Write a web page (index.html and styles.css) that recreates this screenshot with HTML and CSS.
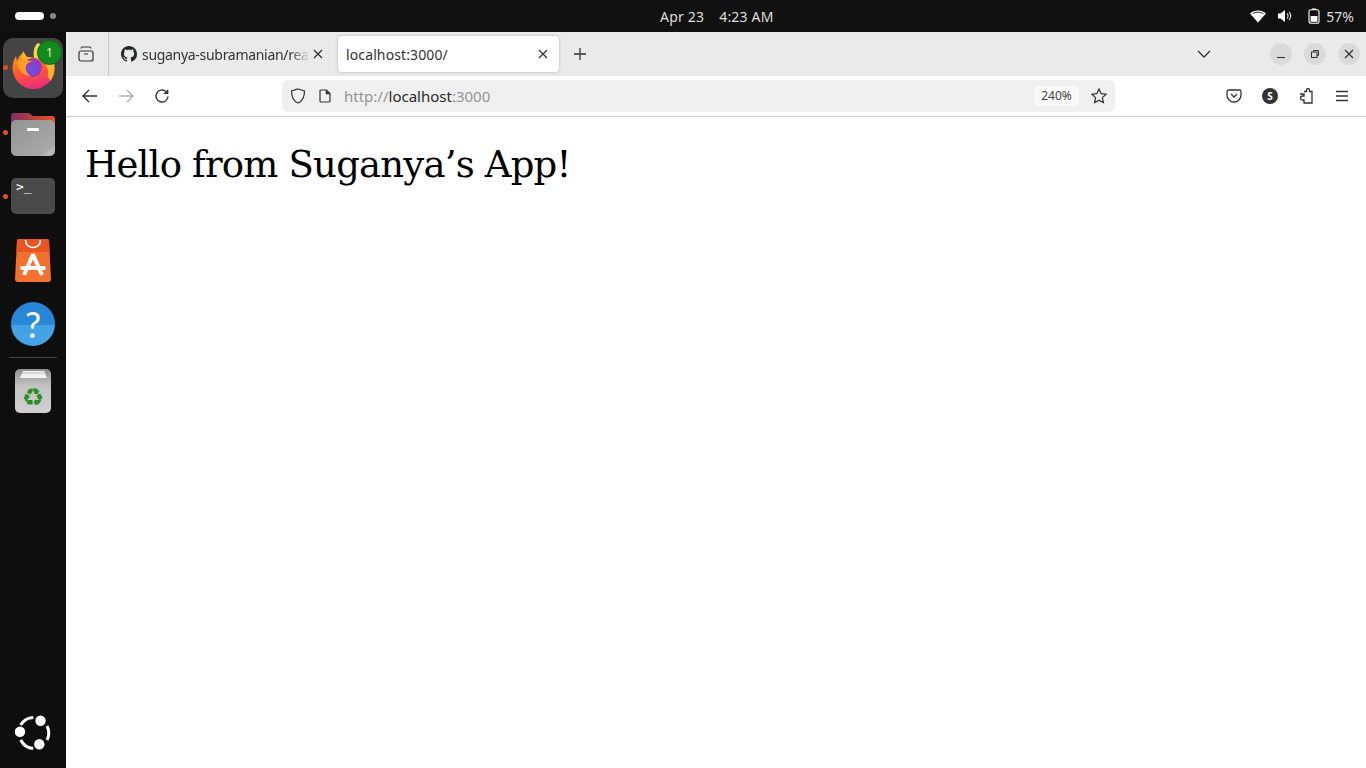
FILE: index.html
```html
<!doctype html>
<html lang="en">
    <head>
        <meta charset="UTF-8" />
        <title>localhost:3000</title>
        <link rel="stylesheet" href="styles.css">
    </head>
    <body>
        <header class="topbar">
            <div class="workspaces"><span class="ws-active"></span><span class="ws-dot"></span></div>
            <div class="clock"><span>Apr 23</span><span>4:23 AM</span></div>
            <div class="status">
                <svg width="16" height="13" viewBox="0 0 16 13"><path d="M0 3.6C2 1.4 5 .4 8 .4s6 1 8 3.2L8 12.6z" fill="#fff"/><path d="M2.6 3.9C4 2.8 6 2.2 8 2.2s4 .6 5.4 1.7" fill="none" stroke="#111" stroke-width=".9"/></svg>
                <svg class="vol" width="15" height="14" viewBox="0 0 15 14"><path d="M0 4.5h2.6L7 1v12L2.6 9.5H0z" fill="#fff"/><path d="M9 4.5a3.5 3.5 0 0 1 0 5M11 2.8a6 6 0 0 1 0 8.4" fill="none" stroke="#ddd" stroke-width="1.1"/></svg>
                <svg class="batt" width="12" height="16" viewBox="0 0 12 16"><path d="M4 .5h4v1.2H4z" fill="#fff"/><rect x="1" y="1.8" width="10" height="13.5" rx="2" fill="none" stroke="#fff" stroke-width="1.1"/><rect x="2.6" y="8" width="6.8" height="5.8" fill="#fff"/></svg>
                <span>57%</span>
            </div>
        </header>

        <div class="desktop">
            <nav class="dock">
                <div class="dock-tile">
                    <span class="run-dot"></span>
                    <svg width="60" height="60" viewBox="0 0 60 60">
                        <defs>
                            <linearGradient id="foxGrad" x1="0.3" y1="0" x2="0.55" y2="1">
                                <stop offset="0" stop-color="#ff9a1f"/>
                                <stop offset="0.5" stop-color="#ff5a2c"/>
                                <stop offset="1" stop-color="#ec2a86"/>
                            </linearGradient>
                            <linearGradient id="tailGrad" x1="0.2" y1="0" x2="0.6" y2="1">
                                <stop offset="0" stop-color="#f8dc4a"/>
                                <stop offset="1" stop-color="#ffae1f"/>
                            </linearGradient>
                            <radialGradient id="globeGrad" cx="0.45" cy="0.6" r="0.65">
                                <stop offset="0" stop-color="#6a55e4"/>
                                <stop offset="1" stop-color="#a02fb8"/>
                            </radialGradient>
                        </defs>
                        <path d="M9.500 30C9.500 25 11 21 13 18l1 5c1-4 4-7 7-9 0 3 2 5 5 5 4 0 8 1 10 2 8 2 15.500 5 15.500 9a21 21 0 0 1-42 0z" fill="url(#foxGrad)"/>
                        <path d="M31 20c-1-6 0-12 4-15 11 5 17 15 16.500 25 0 6-2 10-4 13-1-2-2-3-3-5 1-3 1-7-1-10-2-5-7-8-12.500-8z" fill="url(#tailGrad)"/>
                        <circle cx="29.500" cy="29.500" r="9.500" fill="url(#globeGrad)"/>
                        <path d="M14 24c3-3 7-4 10-2 2 1 4 1 6 1-3 1-6 2-7 5-1 4 1 8 5 10-6 0-11-4-13-9z" fill="#ff9f22"/>
                        <path d="M20 13l4 6 5 1-7 2-4-2z" fill="#ffb52e"/>
                    </svg>
                    <span class="badge">1</span>
                </div>

                <div class="dock-icon files">
                    <span class="run-dot"></span>
                    <svg width="44" height="44" viewBox="0 0 44 44">
                        <defs>
                            <linearGradient id="folderTab" x1="0" y1="0" x2="1" y2="0">
                                <stop offset="0" stop-color="#7d2f63"/>
                                <stop offset="1" stop-color="#e9531f"/>
                            </linearGradient>
                            <linearGradient id="folderBody" x1="0" y1="0" x2="1" y2="1">
                                <stop offset="0" stop-color="#939393"/>
                                <stop offset="0.85" stop-color="#a8a8a8"/>
                                <stop offset="0.86" stop-color="#b8b8b8"/>
                            </linearGradient>
                        </defs>
                        <path d="M0 4a3 3 0 0 1 3-3h15l4 3h19a3 3 0 0 1 3 3v10H0z" fill="url(#folderTab)"/>
                        <rect x="0" y="8" width="44" height="36" rx="5" fill="url(#folderBody)"/>
                        <rect x="16" y="16" width="12" height="3" rx="1" fill="#fff"/>
                    </svg>
                </div>

                <div class="dock-icon terminal">
                    <span class="run-dot"></span>
                    <div class="term-box">&gt;_</div>
                </div>

                <div class="dock-icon store">
                    <svg width="36" height="43" viewBox="0 0 36 43">
                        <path d="M4 0h28a2 2 0 0 1 2 2l2 38a3 3 0 0 1-3 3H3a3 3 0 0 1-3-3L2 2a2 2 0 0 1 2-2z" fill="#f4702f"/>
                        <path d="M4 0h28a2 2 0 0 1 2 2l.6 11H1.400L2 2a2 2 0 0 1 2-2z" fill="#e95420"/>
                        <path d="M10.500 1c0 10 15 10 15 0" fill="none" stroke="#fff" stroke-width="1.600"/>
                        <path d="M9 36L18 15.500 27 36" fill="none" stroke="#fff" stroke-width="4" stroke-linejoin="bevel"/>
                        <rect x="5" y="27" width="26" height="4" rx="2" fill="#fff"/>
                    </svg>
                </div>

                <div class="dock-icon help">
                    <span>?</span>
                </div>

                <div class="dock-sep"></div>

                <div class="dock-icon trash">
                    <svg width="36" height="44" viewBox="0 0 36 44">
                        <defs>
                            <linearGradient id="binGrad" x1="0" y1="0" x2="0" y2="1">
                                <stop offset="0" stop-color="#8f8f8f"/>
                                <stop offset="0.4" stop-color="#c4c4c4"/>
                                <stop offset="1" stop-color="#d0d0d0"/>
                            </linearGradient>
                        </defs>
                        <rect width="36" height="44" rx="5" fill="url(#binGrad)"/>
                        <path d="M5 9l3-7h21l3 7z" fill="#f2f2f2"/>
                        <path d="M7 4h22" stroke="#aaa" stroke-width=".8"/>
                        <text class="recycle" x="18" y="37" text-anchor="middle">♻</text>
                    </svg>
                </div>

                <div class="dock-ubuntu">
                    <svg width="36" height="36" viewBox="0 0 36 36">
                        <g fill="none" stroke="#fff" stroke-width="3">
                            <path d="M5.700 10A15.500 15.500 0 0 1 18.300 2.500"/>
                            <path d="M32 11A15.500 15.500 0 0 1 32 25"/>
                            <path d="M18.300 33.500A15.500 15.500 0 0 1 5.700 25"/>
                        </g>
                        <circle cx="25.500" cy="5.700" r="5.200" fill="#fff"/>
                        <circle cx="5" cy="16.700" r="5.200" fill="#fff"/>
                        <circle cx="24.300" cy="29.300" r="5.200" fill="#fff"/>
                    </svg>
                </div>
            </nav>

            <div class="browser">
                <div class="tabbar">
                    <button class="tab-view">
                        <svg width="16" height="16" viewBox="0 0 16 16" fill="none" stroke="#333" stroke-width="1.200"><rect x="1" y="5" width="14" height="10" rx="2"/><path d="M3 2.500C3 1.500 3.500 1 4.500 1h7c1 0 1.500.5 1.500 1.500M6 8h4"/></svg>
                    </button>
                    <div class="tab-sep"></div>
                    <div class="tab">
                        <svg width="16" height="16" viewBox="0 0 16 16" fill="#24292f"><path d="M8 0C3.580 0 0 3.580 0 8c0 3.540 2.290 6.530 5.470 7.590.4.070.55-.17.55-.38 0-.19-.01-.82-.01-1.490-2.010.37-2.530-.49-2.690-.94-.09-.23-.48-.94-.82-1.130-.28-.15-.68-.52-.01-.53.63-.01 1.080.58 1.230.82.720 1.210 1.870.87 2.330.66.070-.52.280-.87.510-1.070-1.780-.2-3.640-.89-3.640-3.950 0-.87.310-1.590.820-2.150-.08-.2-.36-1.020.08-2.120 0 0 .67-.21 2.200.82.640-.18 1.320-.27 2-.27s1.360.09 2 .27c1.530-1.040 2.200-.82 2.200-.82.440 1.100.160 1.920.08 2.120.51.560.82 1.270.82 2.150 0 3.070-1.870 3.750-3.650 3.950.29.250.54.730.54 1.480 0 1.070-.01 1.930-.01 2.200 0 .21.150.46.550.38A8.010 8.010 0 0 0 16 8c0-4.420-3.580-8-8-8z"/></svg>
                        <span class="tab-title">suganya-subramanian/rea</span>
                        <svg class="tab-close" width="10" height="10" viewBox="0 0 10 10"><path d="M1 1l8 8M9 1l-8 8" stroke="#333" stroke-width="1.300"/></svg>
                    </div>
                    <div class="tab tab-active">
                        <span class="tab-title">localhost:3000/</span>
                        <svg class="tab-close" width="10" height="10" viewBox="0 0 10 10"><path d="M1 1l8 8M9 1l-8 8" stroke="#333" stroke-width="1.300"/></svg>
                    </div>
                    <svg class="new-tab" width="12" height="12" viewBox="0 0 12 12"><path d="M6 0v12M0 6h12" stroke="#333" stroke-width="1.300"/></svg>
                    <svg class="tab-list" width="14" height="8" viewBox="0 0 14 8"><path d="M1 1l6 6 6-6" fill="none" stroke="#333" stroke-width="1.300"/></svg>
                    <div class="win-controls">
                        <span class="win-btn"><svg width="10" height="10" viewBox="0 0 10 10"><path d="M1 8.500h8" stroke="#333" stroke-width="1.100"/></svg></span>
                        <span class="win-btn"><svg width="10" height="10" viewBox="0 0 10 10" fill="none" stroke="#333"><rect x="1.500" y="3" width="5.500" height="5.500"/><path d="M3.500 3V1.500h5v5H7"/></svg></span>
                        <span class="win-btn"><svg width="10" height="10" viewBox="0 0 10 10"><path d="M1 1l8 8M9 1l-8 8" stroke="#333" stroke-width="1.200"/></svg></span>
                    </div>
                </div>

                <div class="toolbar">
                    <div class="nav-btns">
                        <svg width="16" height="14" viewBox="0 0 16 14" fill="none" stroke="#333" stroke-width="1.400"><path d="M15 7H1.500M7 1L1 7l6 6"/></svg>
                        <svg width="16" height="14" viewBox="0 0 16 14" fill="none" stroke="#b0b0b0" stroke-width="1.400"><path d="M1 7h13.500M9 1l6 6-6 6"/></svg>
                        <svg width="16" height="16" viewBox="0 0 16 16" fill="none" stroke="#333" stroke-width="1.400"><path d="M14 8.500A6 6 0 1 1 12 3.500L14 5.500"/><path d="M14.300 1v5h-5" stroke-width="0" fill="#333"/></svg>
                    </div>
                    <div class="urlbar">
                        <svg class="shield" width="16" height="16" viewBox="0 0 16 16" fill="none" stroke="#333" stroke-width="1.200"><path d="M8 1l6.500 2c0 6-1.500 10-6.500 12C3 13 1.500 9 1.500 3z"/></svg>
                        <svg class="page" width="12" height="14" viewBox="0 0 12 14" fill="none" stroke="#333" stroke-width="1.200"><path d="M1 2a1 1 0 0 1 1-1h5.500L11 4.500V12a1 1 0 0 1-1 1H2a1 1 0 0 1-1-1z"/><path d="M7 1v4h4" fill="#333" stroke-width=".6"/></svg>
                        <div class="url"><span class="dim">http://</span>localhost<span class="dim">:3000</span></div>
                        <span class="zoom-pill">240%</span>
                        <svg class="star" width="16" height="16" viewBox="0 0 16 16" fill="none" stroke="#333" stroke-width="1.200"><path d="M8 1l2.100 4.600 5 .6-3.700 3.400 1 4.900L8 12.100l-4.400 2.400 1-4.900L.9 6.200l5-.6z"/></svg>
                    </div>
                    <div class="tool-icons">
                        <svg width="16" height="14" viewBox="0 0 16 14" fill="none" stroke="#333" stroke-width="1.300"><path d="M1 2.500A1.500 1.500 0 0 1 2.500 1h11A1.500 1.500 0 0 1 15 2.500V6A7 7 0 0 1 1 6z"/><path d="M5 5l3 3 3-3"/></svg>
                        <span class="avatar">S</span>
                        <svg width="16" height="16" viewBox="0 0 16 16" fill="none" stroke="#333" stroke-width="1.300"><path d="M6 3.500h2.500V2a1.500 1.500 0 0 1 3 0v1.500H14V15H6v-3H4.500a2 2 0 0 1 0-4H6V6H2"/></svg>
                        <svg class="menu-icon" width="14" height="12" viewBox="0 0 14 12" stroke="#333" stroke-width="1.300"><path d="M1 1.500h12M1 6h12M1 10.500h12"/></svg>
                    </div>
                </div>

                <main class="page-content">
                    <h1>Hello from Suganya’s App!</h1>
                </main>
            </div>
        </div>
    </body>
</html>
```

FILE: styles.css
```css
* {
    box-sizing: border-box;
}
body {
    margin: 0;
    height: 768px;
    overflow: hidden;
    display: flex;
    flex-direction: column;
    font-family: "Noto Sans", sans-serif;
    background: #fff;
}
svg {
    display: block;
    flex: none;
}

/* top bar */
.topbar {
    height: 32px;
    flex: none;
    background: #111;
    color: #ddd;
    font-size: 14px;
    display: flex;
    align-items: center;
    justify-content: space-between;
    padding: 0 12px 0 15px;
    position: relative;
}
.workspaces {
    display: flex;
    align-items: center;
    gap: 6px;
}
.ws-active {
    width: 29px;
    height: 8px;
    border-radius: 4px;
    background: #fff;
}
.ws-dot {
    width: 6px;
    height: 6px;
    border-radius: 50%;
    background: #888;
}
.clock {
    position: absolute;
    left: 660px;
    display: flex;
    gap: 15px;
    letter-spacing: 0.2px;
}
.status {
    display: flex;
    align-items: center;
}
.status .vol {
    margin-left: 12px;
}
.status .batt {
    margin-left: 15px;
}
.status span {
    margin-left: 6px;
}

/* dock */
.desktop {
    flex: 1;
    display: flex;
    min-height: 0;
}
.dock {
    width: 66px;
    flex: none;
    background: #0e0e0e;
    padding-top: 6px;
    display: flex;
    flex-direction: column;
    align-items: center;
}
.dock-tile {
    width: 60px;
    height: 60px;
    border-radius: 10px;
    background: #444;
    position: relative;
}
.dock-icon {
    position: relative;
}
.run-dot {
    position: absolute;
    width: 5px;
    height: 5px;
    border-radius: 50%;
    background: #e2501c;
}
.dock-tile .run-dot {
    left: 0;
    top: 27px;
}
.badge {
    position: absolute;
    top: 2px;
    right: 1px;
    width: 25px;
    height: 25px;
    border-radius: 50%;
    background: #128a1f;
    border: 1px solid #0d6a18;
    color: #f4e9a0;
    font-size: 12px;
    display: flex;
    align-items: center;
    justify-content: center;
}
.files {
    margin-top: 14px;
}
.files .run-dot {
    left: -8px;
    top: 18px;
}
.terminal {
    margin-top: 22px;
}
.terminal .run-dot {
    left: -8px;
    top: 16px;
}
.term-box {
    width: 44px;
    height: 36px;
    border-radius: 5px;
    background: #4a4a4a;
    color: #fff;
    font-family: "DejaVu Sans Mono", monospace;
    font-size: 13px;
    line-height: 15px;
    padding: 1px 0 0 5px;
}
.store {
    margin-top: 25px;
}
.help {
    margin-top: 20px;
    width: 44px;
    height: 44px;
    border-radius: 50%;
    background: linear-gradient(#2585d6, #2a88d8 52%, #44a3e4 52%, #44a3e4);
    color: #fff;
    font-family: "Lato", sans-serif;
    font-weight: 400;
    font-size: 36px;
    line-height: 44px;
    text-align: center;
}
.dock-sep {
    margin-top: 11px;
    width: 48px;
    height: 1px;
    background: #444;
}
.trash {
    margin-top: 11px;
}
.recycle {
    font-family: "DejaVu Sans", sans-serif;
    font-size: 25px;
    fill: #2e8b24;
}
.dock-ubuntu {
    margin-top: auto;
    margin-bottom: 17px;
}

/* browser tab strip */
.browser {
    flex: 1;
    min-width: 0;
    display: flex;
    flex-direction: column;
}
.tabbar {
    height: 44px;
    flex: none;
    background: #eaeaea;
    display: flex;
    align-items: center;
    color: #333;
    font-size: 14px;
}
.tab-view {
    width: 42px;
    padding: 0 0 0 12px;
    border: none;
    background: none;
}
.tab-sep {
    width: 1px;
    height: 44px;
    background: #c8c8c8;
}
.tab {
    height: 36px;
    display: flex;
    align-items: center;
    margin-left: 11px;
    padding-left: 1px;
    width: 216px;
}
.tab-title {
    margin-left: 5px;
    width: 168px;
    white-space: nowrap;
    letter-spacing: -0.3px;
    -webkit-mask-image: linear-gradient(to right, #000 88%, transparent);
    mask-image: linear-gradient(to right, #000 88%, transparent);
}
.tab-close {
    margin-left: 3px;
}
.tab-active {
    width: 221px;
    margin-left: 2px;
    padding-left: 3px;
    background: #fff;
    border-radius: 4px;
    box-shadow: 0 0 3px rgba(0, 0, 0, 0.25);
}
.tab-active .tab-title {
    width: 189px;
    letter-spacing: 0.12px;
    -webkit-mask-image: none;
    mask-image: none;
}
.new-tab {
    margin-left: 15px;
}
.tab-list {
    margin-left: 611px;
}
.win-controls {
    margin-left: 59px;
    display: flex;
    gap: 12px;
}
.win-btn {
    width: 22px;
    height: 22px;
    border-radius: 50%;
    background: #dadada;
    display: flex;
    align-items: center;
    justify-content: center;
}

/* browser toolbar */
.toolbar {
    height: 41px;
    flex: none;
    background: #fff;
    border-bottom: 1px solid #ccc;
    display: flex;
    align-items: center;
    padding-bottom: 1px;
}
.nav-btns {
    width: 216px;
    padding-left: 16px;
    display: flex;
    align-items: center;
    gap: 20px;
}
.urlbar {
    width: 833px;
    height: 32px;
    border-radius: 6px;
    background: #f0f0f0;
    display: flex;
    align-items: center;
    padding-left: 8px;
    font-size: 15px;
    color: #2a2a2a;
}
.page {
    margin-left: 13px;
}
.url {
    margin-left: 13px;
    flex: 1;
}
.dim {
    color: #949494;
}
.zoom-pill {
    width: 45px;
    height: 20px;
    border-radius: 4px;
    background: #f9f9f9;
    color: #444;
    font-size: 12px;
    line-height: 20px;
    text-align: center;
}
.star {
    margin-left: 12px;
    margin-right: 8px;
}
.tool-icons {
    margin-left: 111px;
    display: flex;
    align-items: center;
    gap: 20px;
}
.menu-icon {
    margin-left: 1px;
}
.avatar {
    width: 16px;
    height: 16px;
    border-radius: 50%;
    background: #333;
    color: #fff;
    font-size: 10px;
    font-weight: 700;
    line-height: 16px;
    text-align: center;
}

/* page */
.page-content {
    flex: 1;
    padding: 22px 19px;
}
h1 {
    margin: 0;
    font-family: "DejaVu Serif", serif;
    font-weight: 400;
    font-size: 37px;
    line-height: 52px;
    color: #000;
    letter-spacing: -0.8px;
}
```
